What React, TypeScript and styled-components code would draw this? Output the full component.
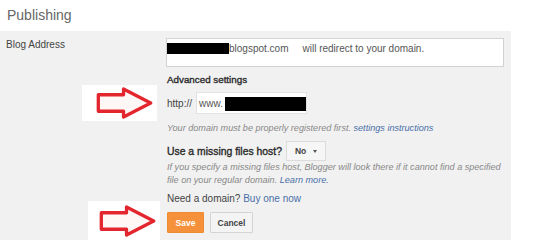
import React from 'react';
import styled, { createGlobalStyle } from 'styled-components';

const GlobalStyle = createGlobalStyle`
  html, body {
    margin: 0;
    padding: 0;
    background: #ffffff;
  }
  body {
    font-family: "Liberation Sans", Arial, sans-serif;
    color: #333;
  }
`;

const Arrow = ({ className }: { className?: string }) => (
  <svg className={className} viewBox="0 0 58 33" width="57" height="32">
    <polygon
      points="2,8 28,8 28,2 56,16.5 28,31 28,25 2,25"
      fill="#fff6f6"
      stroke="#e3262d"
      strokeWidth="3.4"
      strokeLinejoin="round"
    />
  </svg>
);

const App = () => {
  return (
    <>
      <GlobalStyle />
      <Page>
        <Title>Publishing</Title>
        <Panel>
          <Label>Blog Address</Label>
          <Content>
            <AddressBox>
              <Redacted $w={62} $h={11} />
              <span>blogspot.com</span>
              <Redirect>will redirect to your domain.</Redirect>
            </AddressBox>

            <Heading>Advanced settings</Heading>

            <HttpRow>
              <Callout $left={-85} $top={-7} $w={75} $h={36}>
                <Arrow />
              </Callout>
              <Prefix>http://</Prefix>
              <DomainInput>
                <span>www.</span>
                <Redacted $w={82} $h={14} />
              </DomainInput>
            </HttpRow>

            <Help $gap={8}>
              Your domain must be properly registered first. <Link>settings instructions</Link>
            </Help>

            <HostRow>
              <Question>Use a missing files host?</Question>
              <Select>
                No
                <Caret />
              </Select>
            </HostRow>

            <Help $gap={0}>
              If you specify a missing files host, Blogger will look there if it cannot find a specified
              <br />
              file on your regular domain. <Link>Learn more.</Link>
            </Help>

            <Need>
              Need a domain? <Link>Buy one now</Link>
            </Need>

            <Buttons>
              <Callout $left={-79} $top={-11} $w={72} $h={39}>
                <Arrow />
              </Callout>
              <SaveButton>Save</SaveButton>
              <CancelButton>Cancel</CancelButton>
            </Buttons>
          </Content>
        </Panel>
      </Page>
    </>
  );
};

export default App;

// Styled Components
const Page = styled.div`
  width: 550px;
  height: 244px;
  overflow: hidden;
`;

const Title = styled.h1`
  margin: 0;
  height: 31px;
  line-height: 30px;
  padding-left: 7px;
  font-size: 14px;
  font-weight: normal;
  color: #666;
`;

const Panel = styled.div`
  width: 511px;
  box-sizing: border-box;
  background: #f1f1f1;
  padding: 7px 0 7px 6px;
  display: grid;
  grid-template-columns: 161px 1fr;
`;

const Label = styled.div`
  font-size: 10px;
  line-height: 13px;
  color: #444;
`;

const Content = styled.div`
  display: flex;
  flex-direction: column;
  align-items: flex-start;
`;

const AddressBox = styled.div`
  width: 338px;
  height: 29px;
  box-sizing: border-box;
  margin-left: -1px;
  padding-top: 3px;
  background: #fff;
  border: 1px solid #d2d2d2;
  display: flex;
  align-items: flex-start;
  font-size: 10px;
  line-height: 13px;
  color: #555;
`;

const Redacted = styled.span<{ $w: number; $h: number }>`
  display: inline-block;
  width: ${(p) => p.$w}px;
  height: ${(p) => p.$h}px;
  background: #000;
  margin-top: 1px;
`;

const Redirect = styled.span`
  margin-left: 14px;
`;

const Heading = styled.div`
  margin-top: 6px;
  font-size: 9.8px;
  line-height: 14px;
  color: #2a2a2a;
  -webkit-text-stroke: 0.35px #2a2a2a;
`;

const HttpRow = styled.div`
  position: relative;
  margin-top: 5px;
  height: 22px;
  display: flex;
  align-items: center;
`;

const Callout = styled.div<{ $left: number; $top: number; $w: number; $h: number }>`
  position: absolute;
  left: ${(p) => p.$left}px;
  top: ${(p) => p.$top}px;
  width: ${(p) => p.$w}px;
  height: ${(p) => p.$h}px;
  background: #fff;
  display: flex;
  align-items: center;
  justify-content: flex-end;
  padding-right: 4px;
  box-sizing: border-box;
`;

const Prefix = styled.span`
  font-size: 10px;
  color: #444;
`;

const DomainInput = styled.div`
  margin-left: 4px;
  width: 111px;
  height: 22px;
  box-sizing: border-box;
  background: #fff;
  border: 1px solid #e2e2e2;
  display: flex;
  align-items: center;
  padding-left: 2px;
  font-size: 10px;
  color: #555;
  & > span:first-child {
    margin-right: 2px;
  }
`;

const Help = styled.div<{ $gap: number }>`
  margin-top: ${(p) => p.$gap}px;
  font-size: 9.1px;
  line-height: 13px;
  font-style: italic;
  color: #888;
  white-space: nowrap;
`;

const Link = styled.span`
  color: #4a6fa8;
`;

const HostRow = styled.div`
  margin-top: 6px;
  height: 20px;
  display: flex;
  align-items: center;
  gap: 4px;
`;

const Question = styled.span`
  font-size: 10.4px;
  color: #2a2a2a;
  -webkit-text-stroke: 0.35px #2a2a2a;
`;

const Select = styled.div`
  width: 40px;
  height: 20px;
  box-sizing: border-box;
  border: 1px solid #dcdcdc;
  background: #f6f6f6;
  display: flex;
  align-items: center;
  padding-left: 8px;
  gap: 7px;
  font-size: 8.5px;
  font-weight: bold;
  color: #444;
`;

const Caret = styled.span`
  width: 0;
  height: 0;
  border-left: 2.5px solid transparent;
  border-right: 2.5px solid transparent;
  border-top: 3px solid #555;
`;

const Need = styled.div`
  margin-top: 5px;
  font-size: 10px;
  line-height: 14px;
  color: #444;
`;

const Buttons = styled.div`
  position: relative;
  margin-top: 6px;
  display: flex;
  gap: 6px;
`;

const BaseButton = styled.div`
  height: 21px;
  box-sizing: border-box;
  display: flex;
  align-items: center;
  justify-content: center;
  font-size: 8.5px;
  font-weight: bold;
  border-radius: 1px;
`;

const SaveButton = styled(BaseButton)`
  width: 37px;
  background: #f5913a;
  border: 1px solid #ee8a30;
  color: #fff;
`;

const CancelButton = styled(BaseButton)`
  width: 43px;
  background: #f4f4f4;
  border: 1px solid #d4d4d4;
  color: #444;
`;
